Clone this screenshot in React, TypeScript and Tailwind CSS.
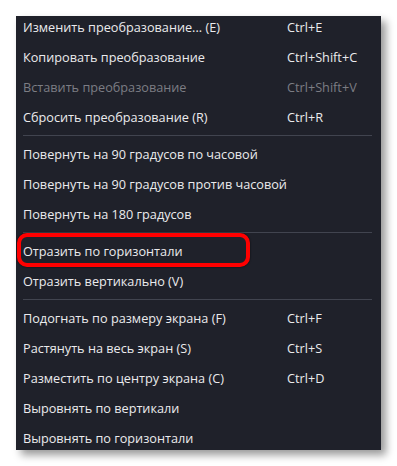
import React from "react";

type Item =
  | { type: "item"; label: string; shortcut?: string; disabled?: boolean; highlight?: boolean }
  | { type: "sep" };

const items: Item[] = [
  { type: "item", label: "Изменить преобразование... (E)", shortcut: "Ctrl+E" },
  { type: "item", label: "Копировать преобразование", shortcut: "Ctrl+Shift+C" },
  { type: "item", label: "Вставить преобразование", shortcut: "Ctrl+Shift+V", disabled: true },
  { type: "item", label: "Сбросить преобразование (R)", shortcut: "Ctrl+R" },
  { type: "sep" },
  { type: "item", label: "Повернуть на 90 градусов по часовой" },
  { type: "item", label: "Повернуть на 90 градусов против часовой" },
  { type: "item", label: "Повернуть на 180 градусов" },
  { type: "sep" },
  { type: "item", label: "Отразить по горизонтали", highlight: true },
  { type: "item", label: "Отразить вертикально (V)" },
  { type: "sep" },
  { type: "item", label: "Подогнать по размеру экрана (F)", shortcut: "Ctrl+F" },
  { type: "item", label: "Растянуть на весь экран (S)", shortcut: "Ctrl+S" },
  { type: "item", label: "Разместить по центру экрана (C)", shortcut: "Ctrl+D" },
  { type: "item", label: "Выровнять по вертикали" },
  { type: "item", label: "Выровнять по горизонтали" },
];

export default function App() {
  return (
    <div
      className="w-[397px] h-[466px] bg-white pt-[16px] pl-[16px]"
      style={{ fontFamily: '"Open Sans", "Noto Sans", sans-serif' }}
    >
      <div className="w-[365px] h-[434px] bg-[#1f212a] overflow-hidden shadow-[5px_5px_8px_rgba(0,0,0,0.4)]">
        <div className="-mt-[4px] flex flex-col">
          {items.map((it, i) =>
            it.type === "sep" ? (
              <div key={i} className="py-[3px] pl-[7px] pr-[9px]">
                <div className="h-px bg-[#41444f]" />
              </div>
            ) : (
              <div
                key={i}
                className={`relative h-[30px] grid grid-cols-[264px_1fr] items-center pl-[7px] text-[12.7px] leading-[30px] ${
                  it.disabled ? "text-[#7c7d84]" : "text-[#ebebed]"
                }`}
              >
                <span className="whitespace-nowrap">{it.label}</span>
                <span className="whitespace-nowrap">{it.shortcut ?? ""}</span>
                {it.highlight && (
                  <div className="absolute top-[-3px] left-[1px] w-[233px] h-[34px] border-[4px] border-[#ff0000] rounded-[10px] shadow-[0_0_2px_rgba(0,0,0,0.8)]" />
                )}
              </div>
            )
          )}
        </div>
      </div>
    </div>
  );
}
